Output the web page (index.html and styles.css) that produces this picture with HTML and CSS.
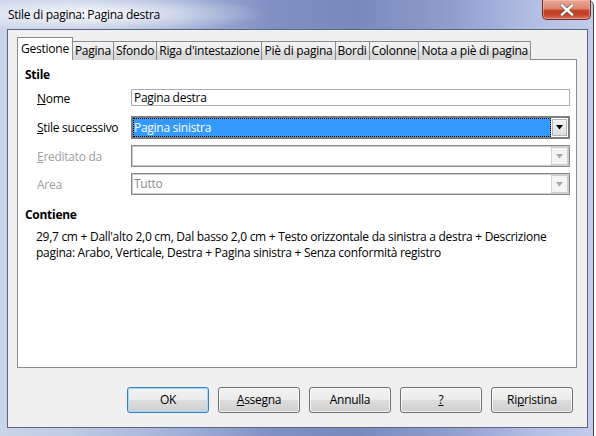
FILE: index.html
```html
<!DOCTYPE html>
<html>
<head>
<meta charset="utf-8">
<link rel="stylesheet" href="styles.css">
</head>
<body>
<div class="window">
  <div class="titlebar">
    <span class="title">Stile di pagina: Pagina destra</span>
    <div class="close">
      <svg width="14" height="12" viewBox="0 0 14 12">
        <path d="M2 1.5 L12 10.5 M12 1.5 L2 10.5" stroke="#4a4a4a" stroke-width="4.2" stroke-linecap="square" fill="none" opacity="0.55"/>
        <path d="M2 1.5 L12 10.5 M12 1.5 L2 10.5" stroke="#ffffff" stroke-width="2.4" stroke-linecap="square" fill="none"/>
      </svg>
    </div>
  </div>
  <div class="client">
    <div class="tabs">
      <div class="tab active">Gestione</div>
      <div class="tab">Pagina</div>
      <div class="tab">Sfondo</div>
      <div class="tab">Riga d'intestazione</div>
      <div class="tab">Piè di pagina</div>
      <div class="tab">Bordi</div>
      <div class="tab">Colonne</div>
      <div class="tab">Nota a piè di pagina</div>
    </div>
    <div class="panel">
      <div class="heading">Stile</div>
      <div class="form">
        <div class="label first"><u>N</u>ome</div>
        <div class="input">Pagina destra</div>

        <div class="label"><u>S</u>tile successivo</div>
        <div class="combo focused">
          <div class="combo-text"><span class="sel">Pagina sinistra</span></div>
          <div class="combo-btn">
            <svg width="7" height="5" viewBox="0 0 7 5"><path d="M0 0 H7 L3.5 4.5 Z" fill="#000"/></svg>
          </div>
        </div>

        <div class="label disabled"><u>E</u>reditato da</div>
        <div class="combo disabled">
          <div class="combo-text"></div>
          <div class="combo-btn">
            <svg width="7" height="5" viewBox="0 0 7 5"><path d="M0 0 H7 L3.5 4.5 Z" fill="#a8a8a8"/></svg>
          </div>
        </div>

        <div class="label disabled">Area</div>
        <div class="combo disabled">
          <div class="combo-text">Tutto</div>
          <div class="combo-btn">
            <svg width="7" height="5" viewBox="0 0 7 5"><path d="M0 0 H7 L3.5 4.5 Z" fill="#a8a8a8"/></svg>
          </div>
        </div>
      </div>
      <div class="heading contiene">Contiene</div>
      <p class="desc">29,7 cm + Dall'alto 2,0 cm, Dal basso 2,0 cm + Testo orizzontale da sinistra a destra + Descrizione<br>pagina: Arabo, Verticale, Destra + Pagina sinistra + Senza conformità registro</p>
    </div>
    <div class="buttons">
      <div class="btn default">OK</div>
      <div class="btn"><u>A</u>ssegna</div>
      <div class="btn">Annulla</div>
      <div class="btn"><u>?</u></div>
      <div class="btn">Ri<u>p</u>ristina</div>
    </div>
  </div>
</div>
</body>
</html>
```

FILE: styles.css
```css
* { box-sizing: border-box; }

html, body {
  margin: 0;
  padding: 0;
  background: #ffffff;
}

body {
  width: 596px;
  height: 436px;
  overflow: hidden;
  font-family: "Open Sans", "Noto Sans", "DejaVu Sans", sans-serif;
  font-size: 12px;
  letter-spacing: -0.28px;
  color: #000;
}

u { text-decoration: underline; text-underline-offset: 1px; }

.window {
  width: 594px;
  height: 436px;
  display: flex;
  flex-direction: column;
  padding: 0 5px 8px 7px;
  border-right: 1px solid #3e4656;
  border-radius: 0 6px 0 0;
  background:
    radial-gradient(ellipse 170px 20px at 95px 14px, rgba(255,255,255,0.9), rgba(255,255,255,0) 100%),
    linear-gradient(to right, #c9d4ea 0%, #bfcbe3 12%, #a2b1d8 30%, #8190c2 46%, #7a89bd 60%, #909ecd 76%, #b2bee3 90%, #c2cbeb 100%);
}

.titlebar {
  height: 29px;
  flex: none;
  display: flex;
  justify-content: space-between;
  align-items: flex-start;
}

.title {
  margin: 6px 0 0 1px;
  line-height: 17px;
  color: #000;
}

.close {
  width: 49px;
  height: 20px;
  margin-right: -3px;
  border: 1px solid #6a2f26;
  border-top: none;
  border-radius: 0 0 5px 5px;
  background: linear-gradient(to bottom, #e9a898 0%, #dc8672 45%, #c8432b 55%, #c23f25 75%, #d9715a 100%);
  box-shadow: inset 0 0 0 1px rgba(255,200,190,0.45);
  display: flex;
  align-items: center;
  justify-content: center;
}

.client {
  flex: 1;
  background: #f0f0f0;
  border: 1px solid #5d6680;
  padding: 8px 10px 0 9px;
  display: flex;
  flex-direction: column;
}

.tabs {
  display: flex;
  align-items: flex-end;
  height: 22px;
  flex: none;
  position: relative;
  z-index: 1;
  margin-bottom: -1px;
  letter-spacing: -0.24px;
}

.tab {
  height: 19px;
  line-height: 17px;
  padding: 0 2px;
  border: 1px solid #898c95;
  border-bottom: none;
  margin-right: -1px;
  background: linear-gradient(to bottom, #f3f3f3 0%, #ebebeb 50%, #dcdcdc 51%, #d7d7d7 100%);
  white-space: nowrap;
}

.tab.active {
  height: 23px;
  line-height: 21px;
  padding: 0 3px;
  background: #ffffff;
  position: relative;
  z-index: 2;
}

.panel {
  height: 309px;
  flex: none;
  background: #ffffff;
  border: 1px solid #898c95;
  padding: 7px 0 0 7px;
}

.heading {
  font-weight: bold;
  line-height: 16px;
  height: 16px;
}

.form {
  margin: 6px 0 0 12px;
  display: grid;
  grid-template-columns: 94px 439px;
  grid-template-rows: 21px 23px 22px 22px;
  row-gap: 6px;
  align-items: center;
}

.label {
  line-height: 16px;
  white-space: nowrap;
  padding-top: 1px;
}

.label.first {
  align-self: start;
  padding-top: 2px;
}

.label.disabled { color: #a0a0a0; }

.input {
  align-self: start;
  height: 17px;
  border: 1px solid #a9aeb8;
  padding: 0 0 0 2px;
  line-height: 15px;
}

.combo {
  height: 100%;
  display: flex;
  border: 1px solid #8a8a8a;
  box-shadow: inset 0 0 0 1px #c9c9c9;
  padding: 1px;
  background: #ffffff;
}

.combo-text {
  flex: 1;
  line-height: 18px;
  padding-left: 1px;
  white-space: nowrap;
}

.combo.focused {
  border: 2px solid #7c7c7c;
  box-shadow: none;
  padding: 0;
}

.combo.focused .combo-text {
  background: #3399ff;
  color: #ffffff;
  outline: 1px dotted #000000;
  outline-offset: -1px;
  line-height: 19px;
}

.combo.disabled .combo-text { color: #8c8c8c; }

.combo-btn {
  width: 17px;
  flex: none;
  display: flex;
  align-items: center;
  justify-content: center;
  background: linear-gradient(to bottom, #f4f4f4 0%, #e9e9e9 50%, #dcdcdc 100%);
  border: 1px solid #a7a7a7;
}

.combo.focused .combo-btn {
  border: 1px solid #ffffff;
  box-shadow: inset 0 0 0 1px #b5b5b5;
}

.combo.disabled .combo-btn {
  background: #f4f4f4;
  border: 1px solid #d0d0d0;
}

.contiene { margin-top: 12px; }

.desc {
  margin: 6px 0 0 11px;
  line-height: 16px;
  white-space: nowrap;
}

.buttons {
  display: flex;
  justify-content: flex-end;
  gap: 9px;
  margin-top: 19px;
  padding-right: 4px;
}

.btn {
  width: 82px;
  height: 26px;
  border: 1px solid #707070;
  border-radius: 3px;
  background: linear-gradient(to bottom, #f2f2f2 0%, #ebebeb 48%, #dddddd 52%, #cfcfcf 100%);
  box-shadow: inset 0 0 0 1px rgba(255,255,255,0.75);
  display: flex;
  align-items: center;
  justify-content: center;
  line-height: 16px;
}

.btn.default {
  border-color: #3c7fb1;
  box-shadow: inset 0 0 0 1px #9fdcf7;
}
```
